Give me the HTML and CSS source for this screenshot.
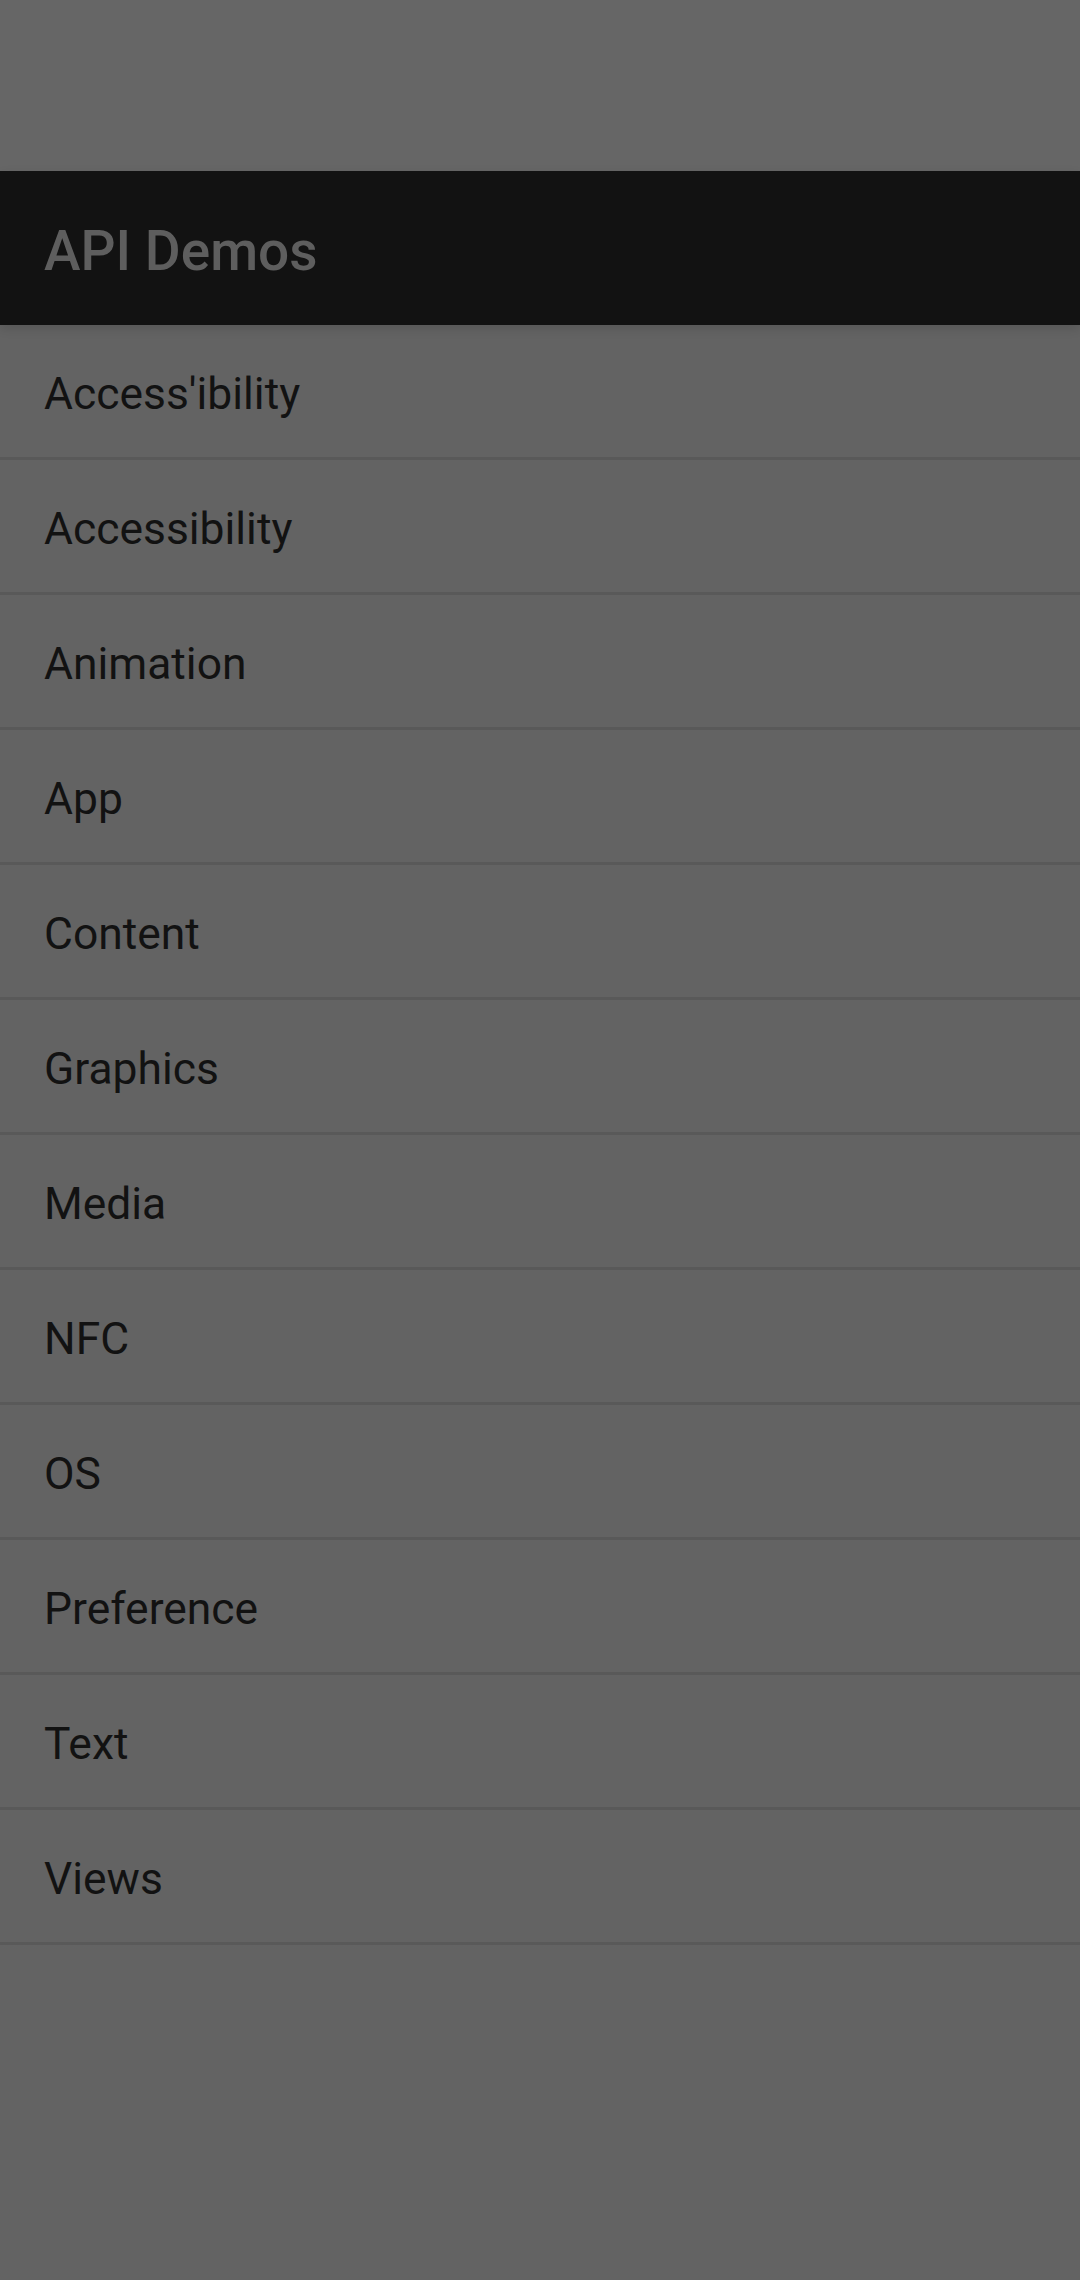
FILE: index.html
```html
<!DOCTYPE html>
<html>
<head>
<meta charset="utf-8">
<link rel="stylesheet" href="styles.css">
</head>
<body>
<div class="status"></div>
<header class="appbar"><h1 class="title">API Demos</h1></header>
<ul class="list">
<li class="row">Access'ibility</li>
<li class="row">Accessibility</li>
<li class="row">Animation</li>
<li class="row">App</li>
<li class="row">Content</li>
<li class="row">Graphics</li>
<li class="row">Media</li>
<li class="row">NFC</li>
<li class="row">OS</li>
<li class="row">Preference</li>
<li class="row">Text</li>
<li class="row">Views</li>
</ul>
</body>
</html>
```
FILE: styles.css
```css
html, body {
  margin: 0;
  padding: 0;
}
body {
  width: 1080px;
  height: 2280px;
  background: #636363;
  font-family: Roboto, "Noto Sans", sans-serif;
  overflow: hidden;
}
.status {
  height: 171px;
  background: #666666;
}
.appbar {
  position: relative;
  z-index: 1;
  height: 154px;
  background: #121212;
  display: flex;
  align-items: center;
  padding-left: 44px;
  box-sizing: border-box;
  box-shadow: 0 4px 10px rgba(0,0,0,0.12);
}
.title {
  margin: 0;
  font-size: 55px;
  font-weight: 500;
  color: #5e5e5e;
  line-height: 1;
  padding-top: 6px;
}
.list {
  list-style: none;
  margin: 0;
  padding: 0;
}
.row {
  box-sizing: content-box;
  height: 126px;
  padding-top: 6px;
  padding-left: 44px;
  border-bottom: 3px solid #595959;
  display: flex;
  align-items: center;
  font-size: 44.4px;
  color: #121212;
  line-height: 1;
}
```
